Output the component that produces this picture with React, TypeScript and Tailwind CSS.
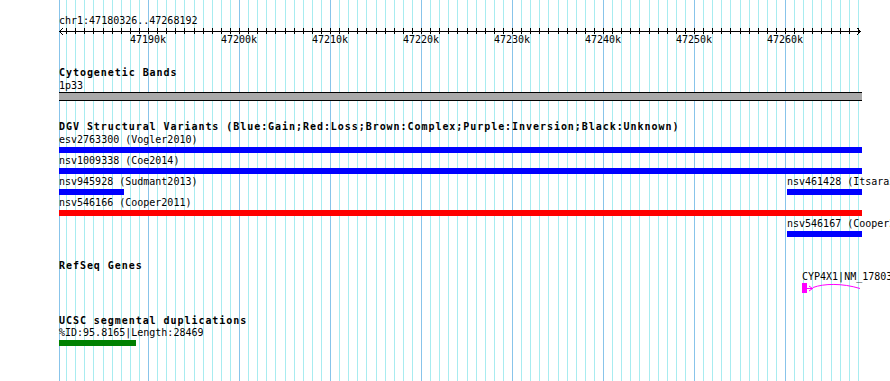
import React from "react";

type Feature = {
  left: number;
  right: number;
  label: string;
  color: string;
};

const ORIGIN = 59;
const kbToX = (kb: number) => Math.round(148 + (kb - 47190) * 9.1);

const gridLines: { x: number; major: boolean }[] = [{ x: 59, major: true }];
for (let kb = 47181; kb <= 47268; kb++) {
  gridLines.push({ x: kbToX(kb), major: kb % 10 === 0 });
}

const majorLabels = [47190, 47200, 47210, 47220, 47230, 47240, 47250, 47260];

const dgvRows: Feature[][] = [
  [{ left: 59, right: 862, label: "esv2763300 (Vogler2010)", color: "bg-[#0000ff]" }],
  [{ left: 59, right: 862, label: "nsv1009338 (Coe2014)", color: "bg-[#0000ff]" }],
  [
    { left: 59, right: 124, label: "nsv945928 (Sudmant2013)", color: "bg-[#0000ff]" },
    { left: 787, right: 862, label: "nsv461428 (Itsara2009)", color: "bg-[#0000ff]" },
  ],
  [{ left: 59, right: 862, label: "nsv546166 (Cooper2011)", color: "bg-[#ff0000]" }],
  [{ left: 787, right: 862, label: "nsv546167 (Cooper2011)", color: "bg-[#0000ff]" }],
];

const segdupRow: Feature[] = [
  { left: 59, right: 136, label: "%ID:95.8165|Length:28469", color: "bg-[#008000]" },
];

function FeatureRow({ features }: { features: Feature[] }) {
  return (
    <div className="relative h-[21px]">
      {features.map((f, i) => (
        <div
          key={i}
          className="absolute top-0"
          style={{ left: f.left - ORIGIN, width: f.right - f.left }}
        >
          <div className="whitespace-nowrap leading-[12px] h-[12px]">{f.label}</div>
          <div className={"mt-px h-[6px] w-full " + f.color}></div>
        </div>
      ))}
    </div>
  );
}

function TrackLabel({ children, className = "" }: { children: React.ReactNode; className?: string }) {
  return (
    <div className={"font-bold tracking-[0.95px] whitespace-nowrap " + className}>{children}</div>
  );
}

function Ruler() {
  const ticks = [];
  for (let kb = 47181; kb <= 47268; kb++) ticks.push(kbToX(kb) - ORIGIN);
  return (
    <div className="relative h-[20px]">
      <svg width="803" height="9" className="block" shapeRendering="crispEdges">
        <line x1="0" y1="4.5" x2="802" y2="4.5" stroke="#000" strokeWidth="1" />
        {ticks.map((x) => (
          <line key={x} x1={x + 0.5} y1="1" x2={x + 0.5} y2="7" stroke="#000" strokeWidth="1" />
        ))}
      </svg>
      <svg width="803" height="9" className="absolute left-0 top-0">
        <polyline points="4,1 0.5,4.5 4,8" fill="none" stroke="#000" strokeWidth="1" />
        <polyline points="798,1 801.5,4.5 798,8" fill="none" stroke="#000" strokeWidth="1" />
      </svg>
      {majorLabels.map((kb) => (
        <span
          key={kb}
          className="absolute top-[7px] w-[40px] text-center leading-[12px]"
          style={{ left: kbToX(kb) - ORIGIN - 20 }}
        >
          {kb}k
        </span>
      ))}
    </div>
  );
}

export default function App() {
  return (
    <div className="relative w-[890px] h-[381px] overflow-hidden bg-white text-black font-['DejaVu_Sans_Mono',monospace] text-[10px]">
      <div className="absolute inset-0">
        {gridLines.map((g) => (
          <div
            key={g.x}
            className={"absolute top-0 h-full w-px " + (g.major ? "bg-[#88c4ea]" : "bg-[#a8ecf0]")}
            style={{ left: g.x }}
          ></div>
        ))}
      </div>

      <div className="relative pl-[59px]">
        <div className="mt-[15px] leading-[12px] h-[12px]">chr1:47180326..47268192</div>
        <Ruler />

        <TrackLabel className="mt-[20px] leading-[12px] h-[12px]">Cytogenetic Bands</TrackLabel>
        <div className="mt-px leading-[12px] h-[12px]">1p33</div>
        <div className="w-[803px] h-[9px] border-y border-black bg-[#a9a9a9]"></div>

        <TrackLabel className="mt-[20px] leading-[12px] h-[12px]">
          DGV Structural Variants (Blue:Gain;Red:Loss;Brown:Complex;Purple:Inversion;Black:Unknown)
        </TrackLabel>
        <div className="mt-px">
          {dgvRows.map((row, i) => (
            <FeatureRow key={i} features={row} />
          ))}
        </div>

        <TrackLabel className="mt-[21px] leading-[11px] h-[11px]">RefSeq Genes</TrackLabel>
        <div className="relative h-[44px]">
          <div className="absolute top-0 left-[743px] whitespace-nowrap leading-[12px]">
            CYP4X1|NM_178033
          </div>
          <svg width="60" height="11" className="absolute top-[12px] left-[743px]">
            <rect x="0" y="0" width="5" height="10" fill="#ff00ff" />
            <line x1="5" y1="5.5" x2="11" y2="5.5" stroke="#ff00ff" strokeWidth="1" />
            <polyline points="7,3 10.5,5.5 7,8" fill="none" stroke="#ff00ff" strokeWidth="1" />
            <path d="M11 4.5 C 22 0.5, 40 0, 58 5.5" fill="none" stroke="#ff00ff" strokeWidth="1" />
          </svg>
        </div>

        <TrackLabel className="leading-[12px] h-[12px]">UCSC segmental duplications</TrackLabel>
        <FeatureRow features={segdupRow} />
      </div>
    </div>
  );
}
